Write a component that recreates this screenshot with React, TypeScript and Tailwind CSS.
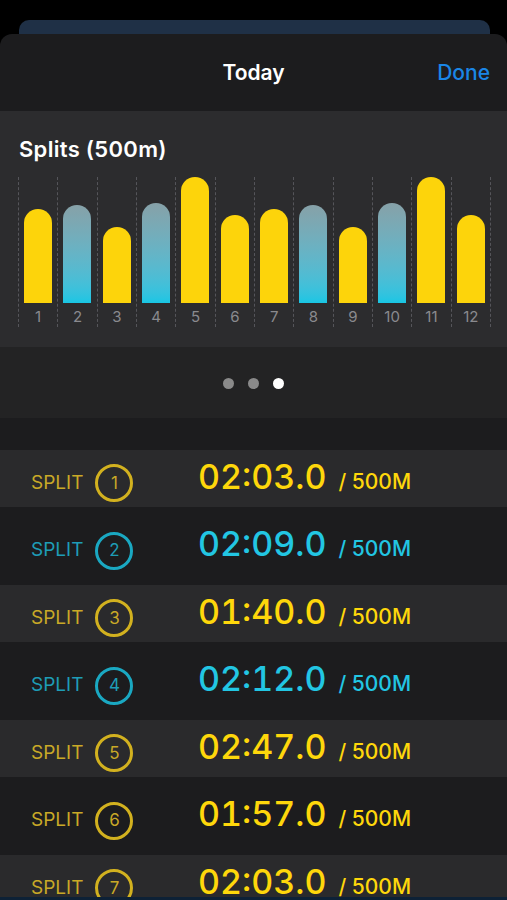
import React from 'react';

type Split = {
  n: number;
  time: string;
  fast: boolean;
};

// bar heights in px, same order as the splits
const bars = [94, 98, 76, 100, 126, 88, 94, 98, 76, 100, 126, 88];
const blueBars = [1, 3, 7, 9];

const splits: Split[] = [
  { n: 1, time: '02:03.0', fast: false },
  { n: 2, time: '02:09.0', fast: true },
  { n: 3, time: '01:40.0', fast: false },
  { n: 4, time: '02:12.0', fast: true },
  { n: 5, time: '02:47.0', fast: false },
  { n: 6, time: '01:57.0', fast: false },
  { n: 7, time: '02:03.0', fast: false },
];

function Chart() {
  return (
    <div className="flex ml-[18px] mr-[16px] h-[150px] border-r border-dashed border-[#55555a]">
      {bars.map((h, i) => (
        <div key={i} className="flex-1 flex flex-col items-center justify-end border-l border-dashed border-[#55555a]">
          <div
            className={
              blueBars.includes(i)
                ? 'w-[28px] rounded-t-[14px] bg-linear-to-b from-[#86a1a8] to-[#17c6e4]'
                : 'w-[28px] rounded-t-[14px] bg-[#fdd40b]'
            }
            style={{ height: h }}
          />
          <div className="h-[24px] pt-[4px] text-[15px] leading-[20px] text-[#8a8a8e]">{i + 1}</div>
        </div>
      ))}
    </div>
  );
}

function Row({ s, light }: { s: Split; light: boolean }) {
  const label = s.fast ? 'text-[#1e9db6]' : 'text-[#c9a927]';
  const ring = s.fast ? 'border-[#1aa8c2]' : 'border-[#d2b11f]';
  const num = s.fast ? 'text-[#22c6e3]' : 'text-[#fed70b]';
  return (
    <div
      className={
        light
          ? 'flex items-center h-[57px] pt-[5px] bg-[#2a2a2c] shrink-0'
          : 'flex items-center h-[78px] pt-[5px] bg-[#1c1c1e] shrink-0'
      }
    >
      <div className="flex items-baseline">
        <div className="w-[198px] pl-[31px] flex items-baseline gap-[12px]">
          <span className={`text-[19px] leading-none ${label}`}>SPLIT</span>
          <span className={`w-[38px] h-[38px] rounded-full border-[3px] ${ring} ${label} flex items-center justify-center text-[17px] leading-none`}>
            {s.n}
          </span>
        </div>
        <span className={`text-[34px] font-medium leading-none tabular-nums ${num}`}>{s.time}</span>
        <span className={`ml-[12px] text-[21px] font-medium leading-none ${num}`}>/ 500M</span>
      </div>
    </div>
  );
}

export default function App() {
  return (
    <div className="h-[900px] bg-black flex flex-col overflow-hidden" style={{ fontFamily: 'Inter, "Noto Sans", sans-serif' }}>
      <div className="pt-[20px] pl-[19px] pr-[17px]">
        <div className="h-[14px] rounded-t-[10px] bg-[#1f3046]" />
      </div>
      <div className="flex-1 min-h-0 overflow-hidden rounded-t-[12px] bg-[#1c1c1e] flex flex-col">
        <div className="h-[77px] shrink-0 relative flex items-center justify-center">
          <span className="text-[21px] font-semibold text-white">Today</span>
          <span className="absolute right-[17px] text-[21px] font-medium text-[#1a86e6]">Done</span>
        </div>
        <div className="shrink-0 bg-[#2c2c2e] pt-[26px] pb-[20px]">
          <div className="pl-[19px] text-[22px] leading-[24px] font-semibold tracking-[0.3px] text-white">Splits (500m)</div>
          <div className="mt-[16px]">
            <Chart />
          </div>
        </div>
        <div className="h-[71px] shrink-0 bg-[#232324] flex items-center justify-center gap-[14px] pt-[2px]">
          <span className="w-[11px] h-[11px] rounded-full bg-[#8a8a8a]" />
          <span className="w-[11px] h-[11px] rounded-full bg-[#8a8a8a]" />
          <span className="w-[11px] h-[11px] rounded-full bg-white" />
        </div>
        <div className="h-[32px] shrink-0" />
        {splits.map((s, i) => (
          <Row key={s.n} s={s} light={i % 2 === 0} />
        ))}
      </div>
      <div className="h-[3px] shrink-0 bg-[#0d2136]" />
    </div>
  );
}
